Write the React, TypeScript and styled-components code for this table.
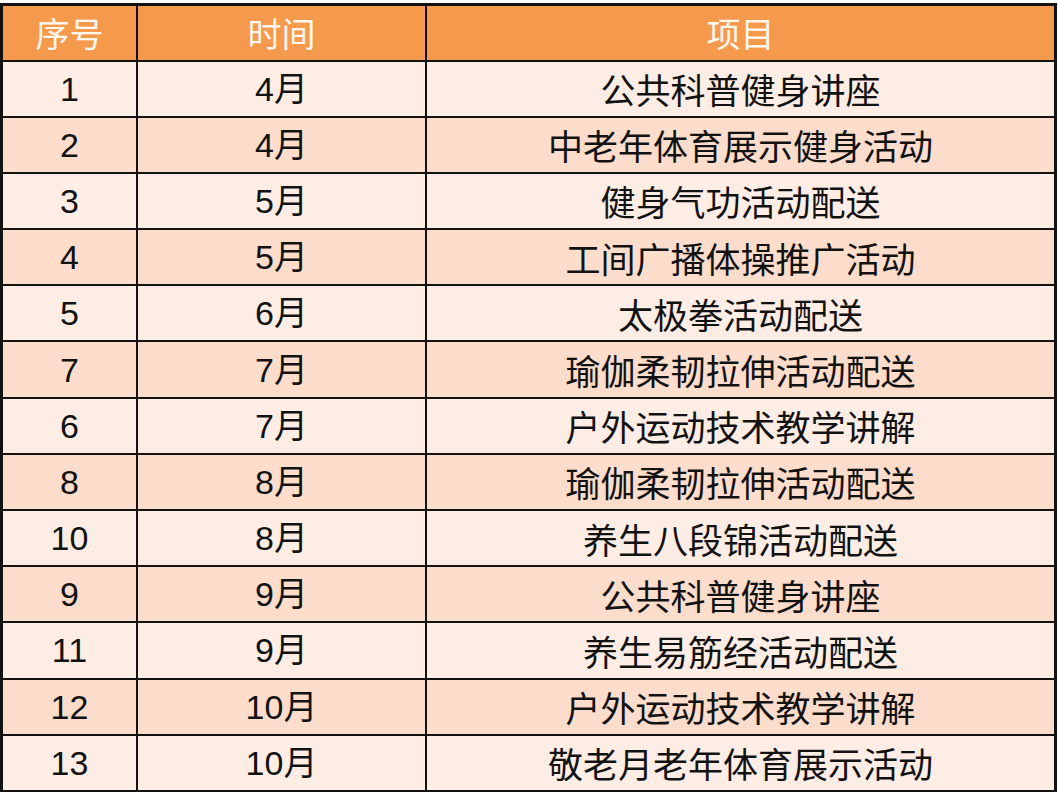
import React from 'react';
import styled, { createGlobalStyle } from 'styled-components';

const GlobalStyle = createGlobalStyle`
  html, body {
    margin: 0;
    padding: 0;
    background: #ffffff;
  }
  body {
    font-family: "Liberation Sans", "Noto Sans CJK SC", sans-serif;
  }
`;

const Page = styled.div`
  padding-top: 3px;
  width: 1058px;
`;

const Table = styled.table`
  width: 1057px;
  border-collapse: collapse;
  border: 3px solid #141210;
  table-layout: fixed;
`;

const HeadCell = styled.th<{ $w?: number }>`
  width: ${({ $w }) => ($w ? `${$w}px` : 'auto')};
  height: 53.5px;
  padding: 0;
  background: #f5994c;
  color: #fff6ee;
  font-family: "Noto Sans CJK SC", sans-serif;
  font-size: 34px;
  font-weight: 400;
  text-align: center;
  border: 2px solid #141210;
  line-height: 1;
`;

const Row = styled.tr<{ $alt: boolean }>`
  background: ${({ $alt }) => ($alt ? '#fcdccb' : '#fdede5')};
`;

const Cell = styled.td`
  height: 54.2px;
  padding: 0;
  color: #121212;
  font-size: 34px;
  text-align: center;
  border: 2px solid #141210;
  line-height: 1;
  font-family: "Liberation Sans", "Noto Sans CJK SC", sans-serif;
`;

const Project = styled(Cell)`
  font-family: "Noto Sans CJK SC", sans-serif;
  font-size: 35px;
`;

const rows: [string, string, string][] = [
  ['1', '4月', '公共科普健身讲座'],
  ['2', '4月', '中老年体育展示健身活动'],
  ['3', '5月', '健身气功活动配送'],
  ['4', '5月', '工间广播体操推广活动'],
  ['5', '6月', '太极拳活动配送'],
  ['7', '7月', '瑜伽柔韧拉伸活动配送'],
  ['6', '7月', '户外运动技术教学讲解'],
  ['8', '8月', '瑜伽柔韧拉伸活动配送'],
  ['10', '8月', '养生八段锦活动配送'],
  ['9', '9月', '公共科普健身讲座'],
  ['11', '9月', '养生易筋经活动配送'],
  ['12', '10月', '户外运动技术教学讲解'],
  ['13', '10月', '敬老月老年体育展示活动'],
];

const App: React.FC = () => (
  <Page>
    <GlobalStyle />
    <Table>
      <thead>
        <tr>
          <HeadCell $w={133}>序号</HeadCell>
          <HeadCell $w={287}>时间</HeadCell>
          <HeadCell>项目</HeadCell>
        </tr>
      </thead>
      <tbody>
        {rows.map(([no, month, name], i) => (
          <Row key={i} $alt={i % 2 === 1}>
            <Cell>{no}</Cell>
            <Cell>{month}</Cell>
            <Project>{name}</Project>
          </Row>
        ))}
      </tbody>
    </Table>
  </Page>
);

export default App;
